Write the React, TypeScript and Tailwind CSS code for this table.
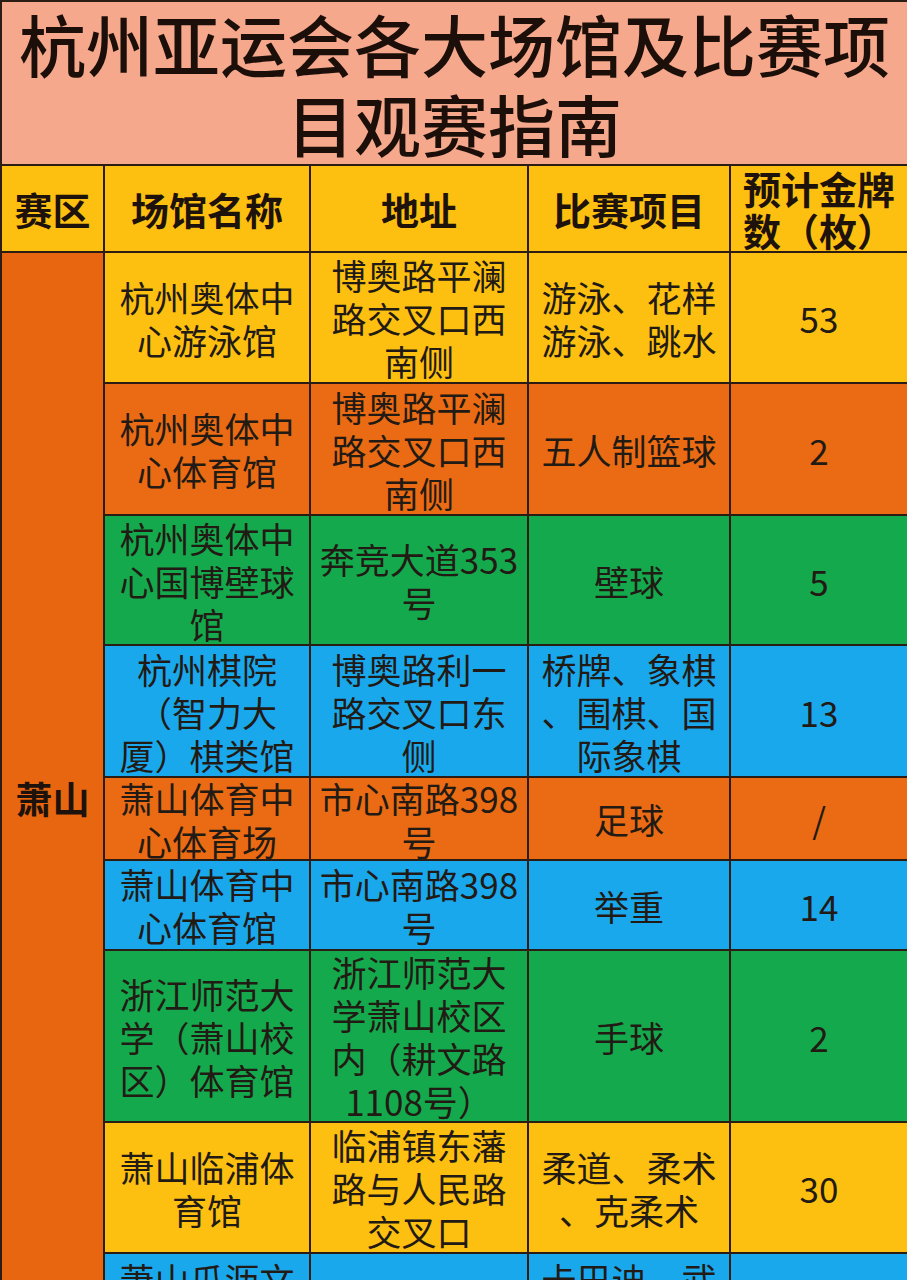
import React from "react";

type Row = {
  bg: string;
  name: string[];
  addr: string[];
  events: string[];
  gold: string;
};

const YELLOW = "bg-[#fdc010]";
const ORANGE = "bg-[#ea6b13]";
const GREEN = "bg-[#15a94d]";
const BLUE = "bg-[#1aa8ed]";

const rows: Row[] = [
  {
    bg: YELLOW,
    name: ["杭州奥体中", "心游泳馆"],
    addr: ["博奥路平澜", "路交叉口西", "南侧"],
    events: ["游泳、花样", "游泳、跳水"],
    gold: "53",
  },
  {
    bg: ORANGE,
    name: ["杭州奥体中", "心体育馆"],
    addr: ["博奥路平澜", "路交叉口西", "南侧"],
    events: ["五人制篮球"],
    gold: "2",
  },
  {
    bg: GREEN,
    name: ["杭州奥体中", "心国博壁球", "馆"],
    addr: ["奔竞大道353", "号"],
    events: ["壁球"],
    gold: "5",
  },
  {
    bg: BLUE,
    name: ["杭州棋院", "（智力大", "厦）棋类馆"],
    addr: ["博奥路利一", "路交叉口东", "侧"],
    events: ["桥牌、象棋", "、围棋、国", "际象棋"],
    gold: "13",
  },
  {
    bg: ORANGE,
    name: ["萧山体育中", "心体育场"],
    addr: ["市心南路398", "号"],
    events: ["足球"],
    gold: "/",
  },
  {
    bg: BLUE,
    name: ["萧山体育中", "心体育馆"],
    addr: ["市心南路398", "号"],
    events: ["举重"],
    gold: "14",
  },
  {
    bg: GREEN,
    name: ["浙江师范大", "学（萧山校", "区）体育馆"],
    addr: ["浙江师范大", "学萧山校区", "内（耕文路", "1108号）"],
    events: ["手球"],
    gold: "2",
  },
  {
    bg: YELLOW,
    name: ["萧山临浦体", "育馆"],
    addr: ["临浦镇东藩", "路与人民路", "交叉口"],
    events: ["柔道、柔术", "、克柔术"],
    gold: "30",
  },
  {
    bg: BLUE,
    name: ["萧山瓜沥文", "体中心"],
    addr: ["瓜沥镇航坞路"],
    events: ["卡巴迪、武", "术"],
    gold: "17",
  },
];

function Cell({ bg, lines }: { bg: string; lines: string[] }) {
  return (
    <div
      className={`${bg} flex flex-col items-center justify-center overflow-hidden text-center text-[35px] leading-[43px] text-[#221a14]`}
    >
      {lines.map((line, i) => (
        <div key={i} className="whitespace-nowrap">
          {line}
        </div>
      ))}
    </div>
  );
}

function HeaderCell({ lines }: { lines: string[] }) {
  return (
    <div className="flex flex-col items-center justify-center bg-[#fdc010] text-center text-[38px] font-bold leading-[42px] text-[#1d120c]">
      {lines.map((line, i) => (
        <div key={i} className="whitespace-nowrap">
          {line}
        </div>
      ))}
    </div>
  );
}

export default function App() {
  return (
    <div className="w-[907px] bg-white font-['Noto_Sans_CJK_SC',sans-serif]">
      <div className="grid grid-cols-[101px_204px_216px_200px_176px] grid-rows-[162px_85px_129px_130px_128px_130px_81px_88px_170px_129px_91px] gap-[2px] bg-[#2b1d14] pl-[2px] pt-[2px]">
        {/* Title */}
        <div className="col-span-5 flex flex-col items-center justify-center bg-[#f6a88c] text-center text-[67px] font-medium leading-[80px] text-[#1c0f09]">
          <div className="whitespace-nowrap">杭州亚运会各大场馆及比赛项</div>
          <div className="whitespace-nowrap">目观赛指南</div>
        </div>

        {/* Header */}
        <HeaderCell lines={["赛区"]} />
        <HeaderCell lines={["场馆名称"]} />
        <HeaderCell lines={["地址"]} />
        <HeaderCell lines={["比赛项目"]} />
        <HeaderCell lines={["预计金牌", "数（枚）"]} />

        {/* Region column */}
        <div className="row-span-9 flex items-center justify-center bg-[#e7660f] text-[37px] font-bold text-[#1d120c]">
          萧山
        </div>

        {rows.map((row, i) => (
          <React.Fragment key={i}>
            <Cell bg={row.bg} lines={row.name} />
            <Cell bg={row.bg} lines={row.addr} />
            <Cell bg={row.bg} lines={row.events} />
            <Cell bg={row.bg} lines={[row.gold]} />
          </React.Fragment>
        ))}
      </div>
    </div>
  );
}
